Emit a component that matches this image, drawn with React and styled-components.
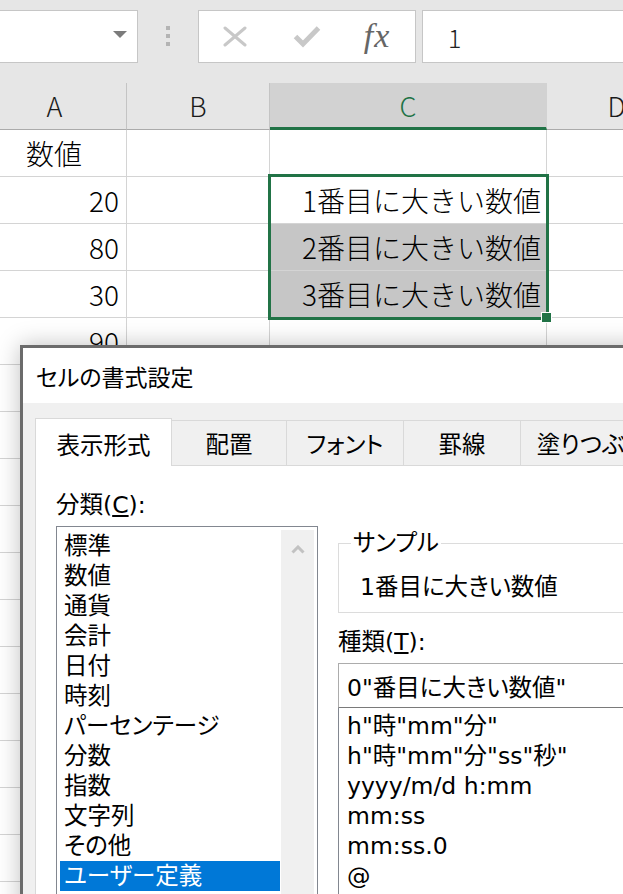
import React from "react";
import styled, { createGlobalStyle } from "styled-components";

const GlobalStyle = createGlobalStyle`
  html, body { margin: 0; padding: 0; background: #fff; }
  body { width: 623px; height: 894px; overflow: hidden; }
  #root { width: 623px; height: 894px; }
  * { box-sizing: border-box; }
`;

const Page = styled.div`
  width: 623px;
  height: 894px;
  overflow: hidden;
  background: #fff;
  font-family: "Noto Sans CJK JP", sans-serif;
  color: #000;
`;

/* ---------- formula bar ---------- */
const Toolbar = styled.div`
  height: 83px;
  background: #e6e6e6;
  display: flex;
  align-items: flex-start;
  padding-top: 10px;
`;

const Field = styled.div`
  height: 53px;
  background: #fff;
  border: 1px solid #c6c6c6;
  display: flex;
  align-items: center;
`;

const NameBox = styled(Field)`
  width: 138px;
  border-left: none;
  justify-content: flex-end;
  padding-right: 10px;
`;

const Caret = styled.span`
  width: 0;
  height: 0;
  border-left: 7px solid transparent;
  border-right: 7px solid transparent;
  border-top: 7px solid #7b7b7b;
  margin-top: -4px;
`;

const Grip = styled.div`
  display: flex;
  flex-direction: column;
  gap: 4px;
  margin: 16px 28px 0;
`;

const GripDot = styled.span`
  width: 4px;
  height: 4px;
  background: #b4b4b4;
`;

const FxBox = styled(Field)`
  width: 218px;
`;

const FxSlot = styled.div`
  width: ${(p) => p.$w}px;
  height: 100%;
  display: flex;
  align-items: center;
  justify-content: center;
`;

const FxLabel = styled.span`
  font-family: "Liberation Serif", "DejaVu Serif", serif;
  font-style: italic;
  font-size: 34px;
  color: #666;
  line-height: 1;
  margin-top: -2px;
  letter-spacing: 1px;
`;

const FormulaInput = styled(Field)`
  flex: 1;
  margin-left: 6px;
  border-right: none;
  padding-left: 25px;
  font-size: 25px;
  font-weight: 300;
  color: #222;
`;

/* ---------- sheet ---------- */
const Sheet = styled.div`
  position: relative;
  height: 811px;
  overflow: hidden;
`;

const SheetGrid = styled.div`
  display: grid;
  grid-template-columns: 144px 143px 277px 140px;
  grid-template-rows: 47px;
  grid-auto-rows: 47px;
  margin-left: -17px;
  font-weight: 300;
`;

const ColHead = styled.div`
  background: ${(p) => (p.$sel ? "#d2d2d2" : "#e6e6e6")};
  border-bottom: ${(p) => (p.$sel ? "3px solid #217346" : "1px solid #ababab")};
  border-right: 1px solid ${(p) => (p.$sel ? "#d2d2d2" : "#c4c4c4")};
  display: flex;
  align-items: center;
  justify-content: center;
  font-size: 27px;
  color: ${(p) => (p.$sel ? "#217346" : "#1a1a1a")};
  padding-bottom: ${(p) => (p.$sel ? "0" : "2px")};
`;

const Cell = styled.div`
  border-right: 1px solid #d4d4d4;
  border-bottom: 1px solid #d4d4d4;
  background: ${(p) => (p.$shade ? "#c6c6c6" : "#fff")};
  display: flex;
  align-items: center;
  justify-content: ${(p) =>
    p.$align === "center" ? "center" : p.$align === "right" ? "flex-end" : "flex-start"};
  padding: 0 ${(p) => p.$pr ?? 7}px 0 6px;
  font-size: 28px;
  white-space: nowrap;
  overflow: hidden;
`;

const Selection = styled.div`
  position: absolute;
  left: 268px;
  top: 91px;
  width: 281px;
  height: 146px;
  border: 3px solid #217346;
  pointer-events: none;
`;

const FillHandle = styled.span`
  position: absolute;
  right: -5px;
  bottom: -5px;
  width: 9px;
  height: 9px;
  background: #217346;
  outline: 1px solid #fff;
`;

/* ---------- dialog ---------- */
const Dialog = styled.div`
  position: absolute;
  left: 20px;
  top: 262px;
  width: 720px;
  height: 700px;
  border: 3px solid #6b6b6b;
  background: #f0f0f0;
  box-shadow: 0 0 22px rgba(0, 0, 0, 0.25);
  font-family: "DejaVu Sans", "Noto Sans CJK JP", sans-serif;
  font-feature-settings: "palt";
  font-size: 23.5px;
  color: #000;
  display: flex;
  flex-direction: column;
`;

const TitleBar = styled.div`
  height: 55px;
  flex: none;
  background: #fff;
  display: flex;
  align-items: center;
  padding-left: 13px;
  font-size: 23px;
`;

const TabStrip = styled.div`
  display: flex;
  align-items: flex-end;
  padding: 15px 0 0 12px;
  position: relative;
  z-index: 1;
`;

const Tab = styled.div`
  width: ${(p) => p.$w}px;
  height: ${(p) => (p.$active ? 48 : 45)}px;
  flex: none;
  background: ${(p) => (p.$active ? "#fff" : "#f0f0f0")};
  border: 1px solid #d9d9d9;
  border-left: ${(p) => (p.$active ? "1px solid #d9d9d9" : "none")};
  border-bottom: none;
  margin-bottom: ${(p) => (p.$active ? -1 : 0)}px;
  display: flex;
  align-items: center;
  justify-content: center;
  padding-top: ${(p) => (p.$active ? 2 : 0)}px;
  white-space: nowrap;
`;

const Panel = styled.div`
  flex: 1;
  margin-left: 12px;
  background: #fff;
  border-top: 1px solid #d9d9d9;
  border-left: 1px solid #d9d9d9;
  padding: 24px 0 0 20px;
  display: grid;
  grid-template-columns: 262px 1fr;
  column-gap: 20px;
  align-items: start;
`;

const Column = styled.div`
  display: flex;
  flex-direction: column;
`;

const Label = styled.div`
  line-height: 30px;
  height: 30px;
  margin-top: ${(p) => p.$mt || 0}px;
  white-space: nowrap;
`;

const ListBox = styled.div`
  margin-top: 6px;
  height: 420px;
  border: 1px solid #828790;
  padding: 3px;
  display: flex;
  gap: 1px;
`;

const Items = styled.div`
  flex: 1;
  padding-top: 1px;
  display: flex;
  flex-direction: column;
`;

const Item = styled.div`
  height: 30px;
  line-height: 30px;
  padding-left: ${(p) => p.$pl ?? 4}px;
  white-space: nowrap;
  background: ${(p) => (p.$sel ? "#0078d7" : "transparent")};
  color: ${(p) => (p.$sel ? "#fff" : "#000")};
`;

const ScrollTrack = styled.div`
  width: 33px;
  background: #f0f0f0;
  display: flex;
  justify-content: center;
  padding-top: 15px;
`;

const SampleBox = styled.fieldset`
  margin: 40px 0 0;
  padding: 0 0 0 12px;
  border: 1px solid #dcdcdc;
  border-right: none;
  min-width: 0;
`;

const SampleLegend = styled.legend`
  padding: 0 2px;
  line-height: 26px;
  font-size: 23.5px;
`;

const SampleValue = styled.div`
  padding: 16px 0 10px 9px;
  line-height: 30px;
  white-space: nowrap;
`;

const FormatInput = styled.div`
  margin-top: 6px;
  height: 45px;
  border: 1px solid #acacac;
  border-bottom-color: #7a7a7a;
  border-right: none;
  display: flex;
  align-items: center;
  padding-left: 8px;
  white-space: nowrap;
`;

const FormatList = styled.div`
  border-left: 1px solid #828790;
  padding-top: 3px;
  height: 300px;
  display: flex;
  flex-direction: column;
`;

/* ---------- icons ---------- */
const CancelIcon = () => (
  <svg width="24" height="21" viewBox="0 0 24 21">
    <path d="M2 2 L22 19 M22 2 L2 19" stroke="#c8c8c8" strokeWidth="3" fill="none" strokeLinecap="round" />
  </svg>
);

const EnterIcon = () => (
  <svg width="28" height="23" viewBox="0 0 28 23">
    <path d="M2.5 11.5 L10 19 L25.5 3" stroke="#c8c8c8" strokeWidth="5" fill="none" strokeLinejoin="miter" />
  </svg>
);

const ChevronUp = () => (
  <svg width="14" height="9" viewBox="0 0 14 9">
    <path d="M1.5 7.5 L7 2 L12.5 7.5" stroke="#c2c2c2" strokeWidth="3" fill="none" />
  </svg>
);

/* ---------- data ---------- */
const rows = [
  { a: "数値", aAlign: "center" },
  { a: "20", c: "1番目に大きい数値" },
  { a: "80", c: "2番目に大きい数値", shade: true },
  { a: "30", c: "3番目に大きい数値", shade: true },
  { a: "90" },
  ...Array.from({ length: 13 }, () => ({})),
];

const tabs = [
  { label: "表示形式", w: 137, active: true },
  { label: "配置", w: 115 },
  { label: "フォント", w: 117 },
  { label: "罫線", w: 117 },
  { label: "塗りつぶし", w: 140 },
];

const categories = [
  "標準", "数値", "通貨", "会計", "日付", "時刻", "パーセンテージ",
  "分数", "指数", "文字列", "その他", "ユーザー定義",
];

const formats = [
  'h"時"mm"分"',
  'h"時"mm"分"ss"秒"',
  "yyyy/m/d h:mm",
  "mm:ss",
  "mm:ss.0",
  "@",
];

export default function App() {
  return (
    <Page>
      <GlobalStyle />
      <Toolbar>
        <NameBox>
          <Caret />
        </NameBox>
        <Grip>
          <GripDot />
          <GripDot />
          <GripDot />
        </Grip>
        <FxBox>
          <FxSlot $w={72}>
            <CancelIcon />
          </FxSlot>
          <FxSlot $w={72}>
            <EnterIcon />
          </FxSlot>
          <FxSlot $w={68}>
            <FxLabel>fx</FxLabel>
          </FxSlot>
        </FxBox>
        <FormulaInput>1</FormulaInput>
      </Toolbar>

      <Sheet>
        <SheetGrid>
          <ColHead>A</ColHead>
          <ColHead>B</ColHead>
          <ColHead $sel>C</ColHead>
          <ColHead>D</ColHead>
          {rows.map((r, i) => (
            <React.Fragment key={i}>
              <Cell $align={r.aAlign || "right"}>{r.a}</Cell>
              <Cell />
              <Cell $align="right" $pr={5} $shade={r.shade}>
                {r.c}
              </Cell>
              <Cell />
            </React.Fragment>
          ))}
        </SheetGrid>

        <Selection>
          <FillHandle />
        </Selection>

        <Dialog>
          <TitleBar>セルの書式設定</TitleBar>
          <TabStrip>
            {tabs.map((t) => (
              <Tab key={t.label} $w={t.w} $active={t.active}>
                {t.label}
              </Tab>
            ))}
          </TabStrip>
          <Panel>
            <Column>
              <Label>
                分類(<u>C</u>):
              </Label>
              <ListBox>
                <Items>
                  {categories.map((c) => (
                    <Item key={c} $sel={c === "ユーザー定義"}>
                      {c}
                    </Item>
                  ))}
                </Items>
                <ScrollTrack>
                  <ChevronUp />
                </ScrollTrack>
              </ListBox>
            </Column>
            <Column>
              <SampleBox>
                <SampleLegend>サンプル</SampleLegend>
                <SampleValue>1番目に大きい数値</SampleValue>
              </SampleBox>
              <Label $mt={14}>
                種類(<u>T</u>):
              </Label>
              <FormatInput>0"番目に大きい数値"</FormatInput>
              <FormatList>
                {formats.map((f) => (
                  <Item key={f} $pl={8}>
                    {f}
                  </Item>
                ))}
              </FormatList>
            </Column>
          </Panel>
        </Dialog>
      </Sheet>
    </Page>
  );
}
